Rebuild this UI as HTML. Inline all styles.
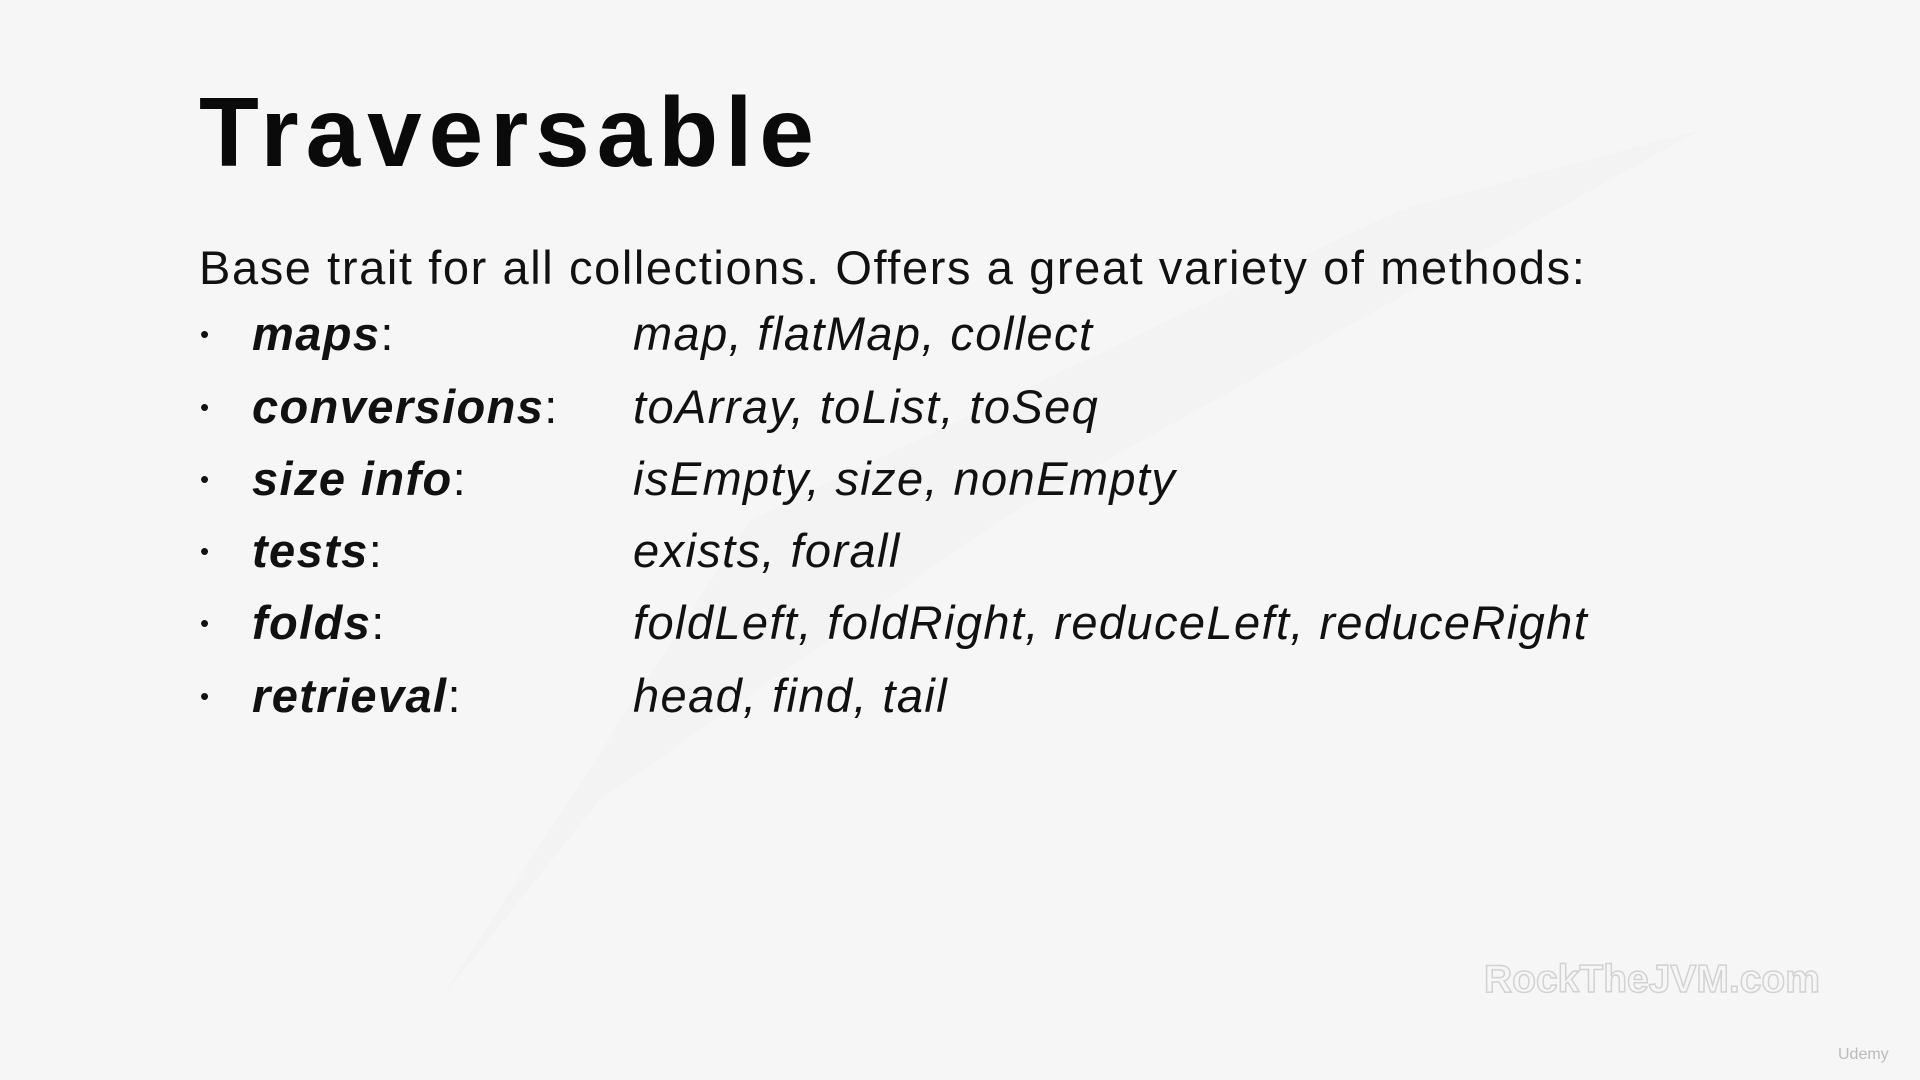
<!DOCTYPE html>
<html><head><meta charset="utf-8"><style>
html,body{margin:0;padding:0;}
body{width:1920px;height:1080px;background:#f6f6f6;position:relative;overflow:hidden;font-family:"Liberation Sans",sans-serif;color:#111;}
.guitar{position:absolute;left:0;top:0;}
h1{position:absolute;left:199px;top:76px;margin:0;font-size:98px;font-weight:bold;letter-spacing:7px;color:#0a0a0a;}
.intro{position:absolute;left:199px;top:240px;font-size:47px;white-space:nowrap;letter-spacing:1.6px;}
.row{position:absolute;left:0;font-size:47px;height:60px;line-height:60px;white-space:nowrap;letter-spacing:1.4px;}
.row .b{position:absolute;left:200px;font-size:26px;}
.row .l{position:absolute;left:252px;}
.row .l i{font-weight:bold;}
.row .v{position:absolute;left:633px;font-style:italic;}
.wm{position:absolute;left:1484px;top:958px;font-size:39px;font-weight:bold;color:#f6f6f6;-webkit-text-stroke:1.5px #d2d2d2;}
.ud{position:absolute;left:1838px;top:1046px;font-size:16px;color:#bbb;}
</style></head><body>
<svg class="guitar" width="1920" height="1080"><path d="M1700 130 L1400 210 L750 520 L440 1000 L600 800 L1000 520 Z" fill="#f1f1f1" opacity=".6"/></svg>
<h1>Traversable</h1>
<div class="intro">Base trait for all collections. Offers a great variety of methods:</div>
<div class="row" style="top:304px"><span class="b">•</span><span class="l"><i>maps</i>:</span><span class="v">map, flatMap, collect</span></div>
<div class="row" style="top:377px"><span class="b">•</span><span class="l"><i>conversions</i>:</span><span class="v">toArray, toList, toSeq</span></div>
<div class="row" style="top:449px"><span class="b">•</span><span class="l"><i>size info</i>:</span><span class="v">isEmpty, size, nonEmpty</span></div>
<div class="row" style="top:521px"><span class="b">•</span><span class="l"><i>tests</i>:</span><span class="v">exists, forall</span></div>
<div class="row" style="top:593px"><span class="b">•</span><span class="l"><i>folds</i>:</span><span class="v">foldLeft, foldRight, reduceLeft, reduceRight</span></div>
<div class="row" style="top:666px"><span class="b">•</span><span class="l"><i>retrieval</i>:</span><span class="v">head, find, tail</span></div>
<div class="wm">RockTheJVM.com</div>
<div class="ud">Udemy</div>
</body></html>
